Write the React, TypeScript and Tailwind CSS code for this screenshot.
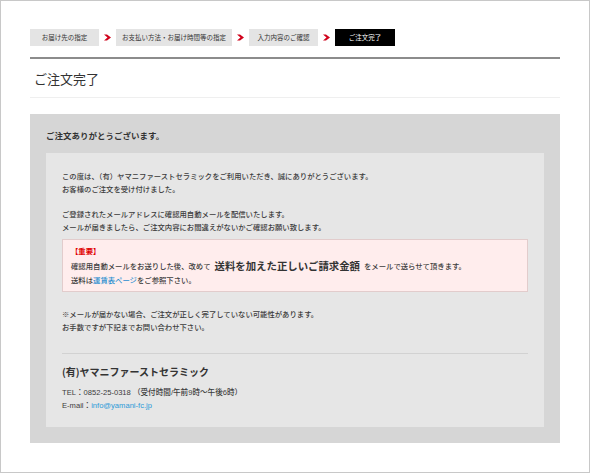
import React from "react";

function Chevron() {
  return (
    <svg width="7" height="7" viewBox="0 0 7 7" className="mx-[5px]">
      <polygon points="0,0.5 3,0.5 7,3.5 3,6.5 0,6.5 3.5,3.5" fill="#d0021b" />
    </svg>
  );
}

function Step({ label, w, active }: { label: string; w: string; active?: boolean }) {
  return (
    <div
      className={
        "h-[17px] flex items-center justify-center text-[6.5px] " +
        w +
        (active ? " bg-black text-white" : " bg-[#e4e4e4] text-[#333]")
      }
    >
      {label}
    </div>
  );
}

export default function App() {
  return (
    <div className="w-[590px] h-[473px] border border-[#c8c8c8] bg-white font-['Noto_Sans_CJK_JP',sans-serif] text-[#3c3c3c] overflow-hidden">
      <div className="px-[29px] pt-[28px]">
        <div className="flex items-center">
          <Step label="お届け先の指定" w="w-[69px]" />
          <Chevron />
          <Step label="お支払い方法・お届け時間等の指定" w="w-[116px]" />
          <Chevron />
          <Step label="入力内容のご確認" w="w-[69px]" />
          <Chevron />
          <Step label="ご注文完了" w="w-[60px]" active />
        </div>
        <div className="mt-[11px] h-[2px] bg-[#8c8c8c]" />
        <div className="h-[38px] flex items-center pl-[4px] text-[13px] text-[#333] leading-none">ご注文完了</div>
        <div className="h-px bg-[#efefef]" />
        <div className="mt-[16px] bg-[#d6d6d6] px-[16px] pt-[15px] pb-[16px]">
          <div className="text-[8.5px] leading-[12px] font-bold text-[#333]">ご注文ありがとうございます。</div>
          <div className="mt-[12px] bg-[#e6e6e6] px-[16px] pt-[16px] pb-[15px] text-[7.35px] leading-[13px] font-medium">
            <p>この度は、（有）ヤマニファーストセラミックをご利用いただき、誠にありがとうございます。</p>
            <p>お客様のご注文を受け付けました。</p>
            <p className="mt-[12px]">ご登録されたメールアドレスに確認用自動メールを配信いたします。</p>
            <p>メールが届きましたら、ご注文内容にお間違えがないかご確認お願い致します。</p>
            <div className="mt-[6px] border border-[#e2cccc] bg-[#ffeded] px-[8px] pt-[4px] pb-[4px]">
              <div className="leading-[14px] text-[#e00000] font-bold">【重要】</div>
              <div className="h-[15px] flex items-center">
                <span>確認用自動メールをお送りした後、改めて</span>
                <span className="mx-[4px] text-[10.4px] leading-[15px] font-bold text-[#333]">送料を加えた正しいご請求金額</span>
                <span>をメールで送らせて頂きます。</span>
              </div>
              <div className="leading-[14px]">
                送料は<span className="text-[#2b8fd0]">運賃表ページ</span>をご参照下さい。
              </div>
            </div>
            <p className="mt-[15px]">
              <span className="font-['Noto_Sans_CJK_JP'] text-[#3c3c3c]">※</span>メールが届かない場合、ご注文が正しく完了していない可能性があります。
            </p>
            <p>お手数ですが下記までお問い合わせ下さい。</p>
            <div className="mt-[20px] h-px bg-[#d2d2d2]" />
            <div className="mt-[11px] text-[10px] leading-[14px] font-bold text-[#333]">(有)ヤマニファーストセラミック</div>
            <div className="mt-[7px] text-[7.6px] font-['Liberation_Sans','Noto_Sans_CJK_JP',sans-serif]">TEL：0852-25-0318 （受付時間/午前9時〜午後6時）</div>
            <div className="text-[7.6px] font-['Liberation_Sans','Noto_Sans_CJK_JP',sans-serif]">
              E-mail：<span className="text-[#2b9ad8]">info@yamani-fc.jp</span>
            </div>
          </div>
        </div>
      </div>
    </div>
  );
}
